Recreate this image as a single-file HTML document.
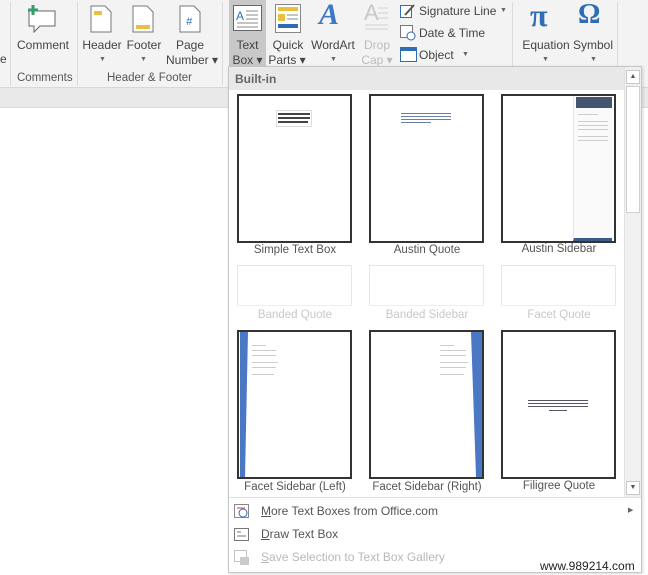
<!DOCTYPE html>
<html><head><meta charset="utf-8">
<style>
*{margin:0;padding:0;box-sizing:border-box}
body{width:648px;height:575px;overflow:hidden;background:#fff;font-family:"Liberation Sans",sans-serif;position:relative;color:#444}
.a{position:absolute}
.rib{left:0;top:0;width:648px;height:88px;background:#f3f3f3;border-bottom:1px solid #d8d8d8}
.band{left:0;top:88px;width:648px;height:20px;background:#e9e9e9;border-bottom:1px solid #dcdcdc}
.lbl{font-size:12px;color:#444;text-align:center;line-height:15px}
.sep{width:1px;background:#dcdcdc;top:2px;height:84px}
.grp{font-size:11.5px;color:#555;top:72px}
.car{font-size:7px;color:#666}
.dd{left:228px;top:66px;width:414px;height:507px;background:#fff;border:1px solid #c6c6c6;box-shadow:1px 1px 3px rgba(0,0,0,.15)}
.hdr{left:229px;top:67px;width:395px;height:23px;background:#e8e8e8;font-size:12px;font-weight:bold;color:#666;padding:5px 0 0 6px}
.th{border:2px solid #333;background:#fff}
.fd{border:1px solid #e6e6e6;background:#fff}
.cap{font-size:11.5px;color:#555;text-align:center;width:130px}
.cf{color:#c8c8c8}
.mi{font-size:12px;color:#555;left:261px}
.ln{height:1px;background:#333;position:absolute}
</style></head><body>
<div class="a rib"></div>
<div class="a band"></div>

<div class="a sep" style="left:10px"></div>
<div class="a sep" style="left:77px"></div>
<div class="a sep" style="left:222px"></div>
<div class="a sep" style="left:512px"></div>
<div class="a sep" style="left:617px"></div>
<div class="a" style="left:0;top:52px;font-size:12px;color:#444">e</div>

<svg class="a" style="left:26px;top:4px" width="32" height="30"><path d="M3 7h26v15H14l-6 6v-6H3z" fill="#fff" stroke="#666"/><path d="M7 1v10M2 6h10" stroke="#3a9a6a" stroke-width="3"/></svg>
<div class="a lbl" style="left:14px;top:38px;width:58px">Comment</div>
<div class="a grp" style="left:17px">Comments</div>

<svg class="a" style="left:90px;top:5px" width="22" height="28"><path d="M1 1h14l6 6v20H1z" fill="#fff" stroke="#777"/><rect x="4" y="6" width="8" height="4" fill="#e8c040"/></svg>
<div class="a lbl" style="left:80px;top:38px;width:44px">Header</div>
<div class="a car" style="left:99px;top:56px">▼</div>
<svg class="a" style="left:132px;top:5px" width="22" height="28"><path d="M1 1h14l6 6v20H1z" fill="#fff" stroke="#777"/><rect x="4" y="20" width="14" height="4" fill="#e8c040"/></svg>
<div class="a lbl" style="left:124px;top:38px;width:40px">Footer</div>
<div class="a car" style="left:140px;top:56px">▼</div>
<svg class="a" style="left:179px;top:5px" width="22" height="28"><path d="M1 1h14l6 6v20H1z" fill="#fff" stroke="#777"/><text x="7" y="20" font-size="11" font-style="italic" fill="#2e6db4" font-family="Liberation Sans">#</text></svg>
<div class="a lbl" style="left:170px;top:38px;width:40px">Page</div>
<div class="a lbl" style="left:164px;top:53px;width:56px">Number ▾</div>
<div class="a grp" style="left:107px">Header &amp; Footer</div>

<div class="a" style="left:229px;top:0;width:37px;height:67px;background:#c8c8c8"></div>
<svg class="a" style="left:233px;top:5px" width="29" height="26"><rect x=".5" y=".5" width="28" height="25" fill="#fff" stroke="#666"/><text x="3" y="15" font-size="12" fill="#2e6db4" font-family="Liberation Sans">A</text><path d="M13 6h12M13 10h12M13 14h12M4 18h21M4 22h21" stroke="#888"/></svg>
<div class="a lbl" style="left:229px;top:38px;width:37px">Text</div>
<div class="a lbl" style="left:229px;top:53px;width:37px">Box ▾</div>

<svg class="a" style="left:275px;top:4px" width="26" height="29"><rect x=".5" y=".5" width="25" height="28" fill="#fff" stroke="#888"/><rect x="3" y="3" width="20" height="4" fill="#e8c040"/><rect x="3" y="10" width="7" height="7" fill="#e8c040"/><path d="M12 11h11M12 15h11" stroke="#888"/><rect x="3" y="20" width="20" height="4" fill="#2e6db4"/></svg>
<div class="a lbl" style="left:268px;top:38px;width:40px">Quick</div>
<div class="a lbl" style="left:268px;top:53px;width:38px">Parts ▾</div>
<div class="a" style="left:319px;top:-2px;font-size:30px;font-style:italic;font-weight:bold;color:#3b78c8;font-family:'Liberation Serif',serif">A</div>
<div class="a lbl" style="left:309px;top:38px;width:48px">WordArt</div>
<div class="a car" style="left:330px;top:56px">▼</div>
<div class="a" style="left:364px;top:0;font-size:22px;color:#c8c8c8">A</div>
<svg class="a" style="left:364px;top:4px" width="26" height="30"><path d="M14 4h10M14 9h10M14 14h10M1 21h23M1 25h23" stroke="#d0d0d0"/></svg>
<div class="a lbl" style="left:362px;top:38px;width:30px;color:#bbb">Drop</div>
<div class="a lbl" style="left:360px;top:53px;width:34px;color:#bbb">Cap ▾</div>

<svg class="a" style="left:400px;top:3px" width="16" height="16"><rect x=".5" y="2.5" width="11" height="12" fill="#fff" stroke="#2e6db4"/><path d="M5 12l9-10" stroke="#555" stroke-width="2"/></svg>
<div class="a" style="left:419px;top:4px;font-size:12px;color:#444">Signature Line</div>
<div class="a car" style="left:500px;top:7px">▼</div>
<svg class="a" style="left:400px;top:25px" width="16" height="16"><rect x=".5" y=".5" width="12" height="12" fill="#fff" stroke="#777"/><circle cx="11" cy="11" r="4" fill="#fff" stroke="#2e6db4"/></svg>
<div class="a" style="left:419px;top:26px;font-size:12px;color:#444">Date &amp; Time</div>
<svg class="a" style="left:400px;top:47px" width="17" height="15"><rect x=".5" y=".5" width="16" height="14" fill="#fff" stroke="#2e6db4"/><rect x="1" y="1" width="15" height="3" fill="#2e6db4"/></svg>
<div class="a" style="left:419px;top:48px;font-size:12px;color:#444">Object</div>
<div class="a car" style="left:462px;top:51px">▼</div>

<div class="a" style="left:530px;top:-3px;font-size:32px;font-weight:bold;color:#2e6db4;font-family:'Liberation Serif',serif">π</div>
<div class="a lbl" style="left:518px;top:38px;width:56px">Equation</div>
<div class="a car" style="left:542px;top:56px">▼</div>
<div class="a" style="left:578px;top:-1px;font-size:28px;font-weight:bold;color:#2e6db4;font-family:'Liberation Serif',serif">Ω</div>
<div class="a lbl" style="left:570px;top:38px;width:46px">Symbol</div>
<div class="a car" style="left:590px;top:56px">▼</div>

<div class="a dd"></div>
<div class="a hdr">Built-in</div>
<div class="a" style="left:624px;top:67px;width:17px;height:430px;background:#f0f0f0;border-left:1px solid #e2e2e2"></div>
<div class="a" style="left:626px;top:70px;width:14px;height:14px;background:#fff;border:1px solid #c8c8c8;font-size:7px;text-align:center;line-height:12px;color:#555">▲</div>
<div class="a" style="left:626px;top:86px;width:14px;height:127px;background:#fff;border:1px solid #cfcfcf"></div>
<div class="a" style="left:626px;top:481px;width:14px;height:14px;background:#fff;border:1px solid #c8c8c8;font-size:7px;text-align:center;line-height:12px;color:#555">▼</div>

<div class="a th" style="left:237px;top:94px;width:115px;height:149px"></div>
<div class="a" style="left:276px;top:110px;width:36px;height:17px;border:1px solid #ddd"></div>
<div class="ln" style="left:278px;top:113px;width:32px;height:2px;background:#444"></div>
<div class="ln" style="left:278px;top:117px;width:32px;height:2px;background:#444"></div>
<div class="ln" style="left:278px;top:121px;width:30px;height:2px;background:#444"></div>
<div class="a th" style="left:369px;top:94px;width:115px;height:149px"></div>
<div class="ln" style="left:401px;top:113px;width:50px;background:#6a7fa8"></div>
<div class="ln" style="left:401px;top:116px;width:50px;background:#6a7fa8"></div>
<div class="ln" style="left:401px;top:119px;width:50px;background:#6a7fa8"></div>
<div class="ln" style="left:401px;top:122px;width:30px;background:#6a7fa8"></div>
<div class="a th" style="left:501px;top:94px;width:115px;height:149px"></div>
<div class="a" style="left:573px;top:96px;width:39px;height:145px;background:#fafafa;border-left:1px solid #e8e8e8;border-bottom:3px solid #3d5a8a"></div>
<div class="a" style="left:576px;top:97px;width:36px;height:11px;background:#43556f"></div>
<div class="ln" style="left:578px;top:114px;width:20px;background:#ccc"></div>
<div class="ln" style="left:578px;top:121px;width:30px;background:#ccc"></div>
<div class="ln" style="left:578px;top:125px;width:30px;background:#ccc"></div>
<div class="ln" style="left:578px;top:129px;width:30px;background:#ccc"></div>
<div class="ln" style="left:578px;top:136px;width:30px;background:#ccc"></div>
<div class="ln" style="left:578px;top:140px;width:30px;background:#ccc"></div>
<div class="a cap" style="left:230px;top:244px">Simple Text Box</div>
<div class="a cap" style="left:362px;top:244px">Austin Quote</div>
<div class="a cap" style="left:494px;top:243px">Austin Sidebar</div>

<div class="a fd" style="left:237px;top:265px;width:115px;height:41px;border-bottom:none"></div>
<div class="a fd" style="left:369px;top:265px;width:115px;height:41px;border-bottom:none"></div>
<div class="a fd" style="left:501px;top:265px;width:115px;height:41px;border-bottom:none"></div>
<div class="a" style="left:237px;top:305px;width:115px;height:1px;background:#eee"></div>
<div class="a" style="left:369px;top:305px;width:115px;height:1px;background:#eee"></div>
<div class="a" style="left:501px;top:305px;width:115px;height:1px;background:#eee"></div>
<div class="a cap cf" style="left:230px;top:309px">Banded Quote</div>
<div class="a cap cf" style="left:362px;top:309px">Banded Sidebar</div>
<div class="a cap cf" style="left:494px;top:309px">Facet Quote</div>

<div class="a th" style="left:237px;top:330px;width:115px;height:149px"></div>
<svg class="a" style="left:239px;top:332px" width="12" height="145"><path d="M1 0h8L6 145H1z" fill="#4a78c4"/></svg>
<div class="ln" style="left:252px;top:345px;width:14px;background:#ccc"></div>
<div class="ln" style="left:252px;top:350px;width:24px;background:#ccc"></div>
<div class="ln" style="left:252px;top:355px;width:24px;background:#ccc"></div>
<div class="ln" style="left:252px;top:362px;width:26px;background:#ccc"></div>
<div class="ln" style="left:252px;top:367px;width:24px;background:#ccc"></div>
<div class="ln" style="left:252px;top:374px;width:22px;background:#ccc"></div>
<div class="a th" style="left:369px;top:330px;width:115px;height:149px"></div>
<svg class="a" style="left:471px;top:332px" width="11" height="145"><path d="M0 0h11v145H5z" fill="#4a78c4"/></svg>
<div class="ln" style="left:440px;top:345px;width:14px;background:#ccc"></div>
<div class="ln" style="left:440px;top:350px;width:26px;background:#ccc"></div>
<div class="ln" style="left:440px;top:355px;width:26px;background:#ccc"></div>
<div class="ln" style="left:440px;top:362px;width:28px;background:#ccc"></div>
<div class="ln" style="left:440px;top:367px;width:26px;background:#ccc"></div>
<div class="ln" style="left:440px;top:374px;width:24px;background:#ccc"></div>
<div class="a th" style="left:501px;top:330px;width:115px;height:149px"></div>
<div class="ln" style="left:528px;top:400px;width:60px;background:#556"></div>
<div class="ln" style="left:528px;top:403px;width:60px;background:#556"></div>
<div class="ln" style="left:528px;top:406px;width:60px;background:#556"></div>
<div class="ln" style="left:549px;top:410px;width:18px;background:#556"></div>
<div class="a cap" style="left:230px;top:481px">Facet Sidebar (Left)</div>
<div class="a cap" style="left:362px;top:481px">Facet Sidebar (Right)</div>
<div class="a cap" style="left:494px;top:480px">Filigree Quote</div>

<div class="a" style="left:229px;top:497px;width:412px;height:1px;background:#e0e0e0"></div>
<svg class="a" style="left:234px;top:504px" width="16" height="16"><rect x=".5" y=".5" width="14" height="13" fill="#fff" stroke="#888"/><circle cx="9" cy="9" r="4" fill="#fff" stroke="#2e6db4"/><path d="M3 4h8" stroke="#c44"/></svg>
<div class="a mi" style="top:504px"><u>M</u>ore Text Boxes from Office.com</div>
<div class="a" style="left:628px;top:506px;font-size:7px;color:#666">▶</div>
<svg class="a" style="left:234px;top:528px" width="16" height="14"><rect x=".5" y=".5" width="14" height="12" fill="#fff" stroke="#777"/><path d="M3 4h4M3 8h9" stroke="#777"/></svg>
<div class="a mi" style="top:527px"><u>D</u>raw Text Box</div>
<svg class="a" style="left:234px;top:550px" width="16" height="16" opacity=".5"><rect x=".5" y=".5" width="12" height="11" fill="#fff" stroke="#888"/><rect x="6" y="7" width="9" height="8" fill="#999"/></svg>
<div class="a mi" style="top:550px;color:#b8b8b8"><u>S</u>ave Selection to Text Box Gallery</div>
<div class="a" style="left:540px;top:559px;font-size:12px;color:#222">www.989214.com</div>
</body></html>
